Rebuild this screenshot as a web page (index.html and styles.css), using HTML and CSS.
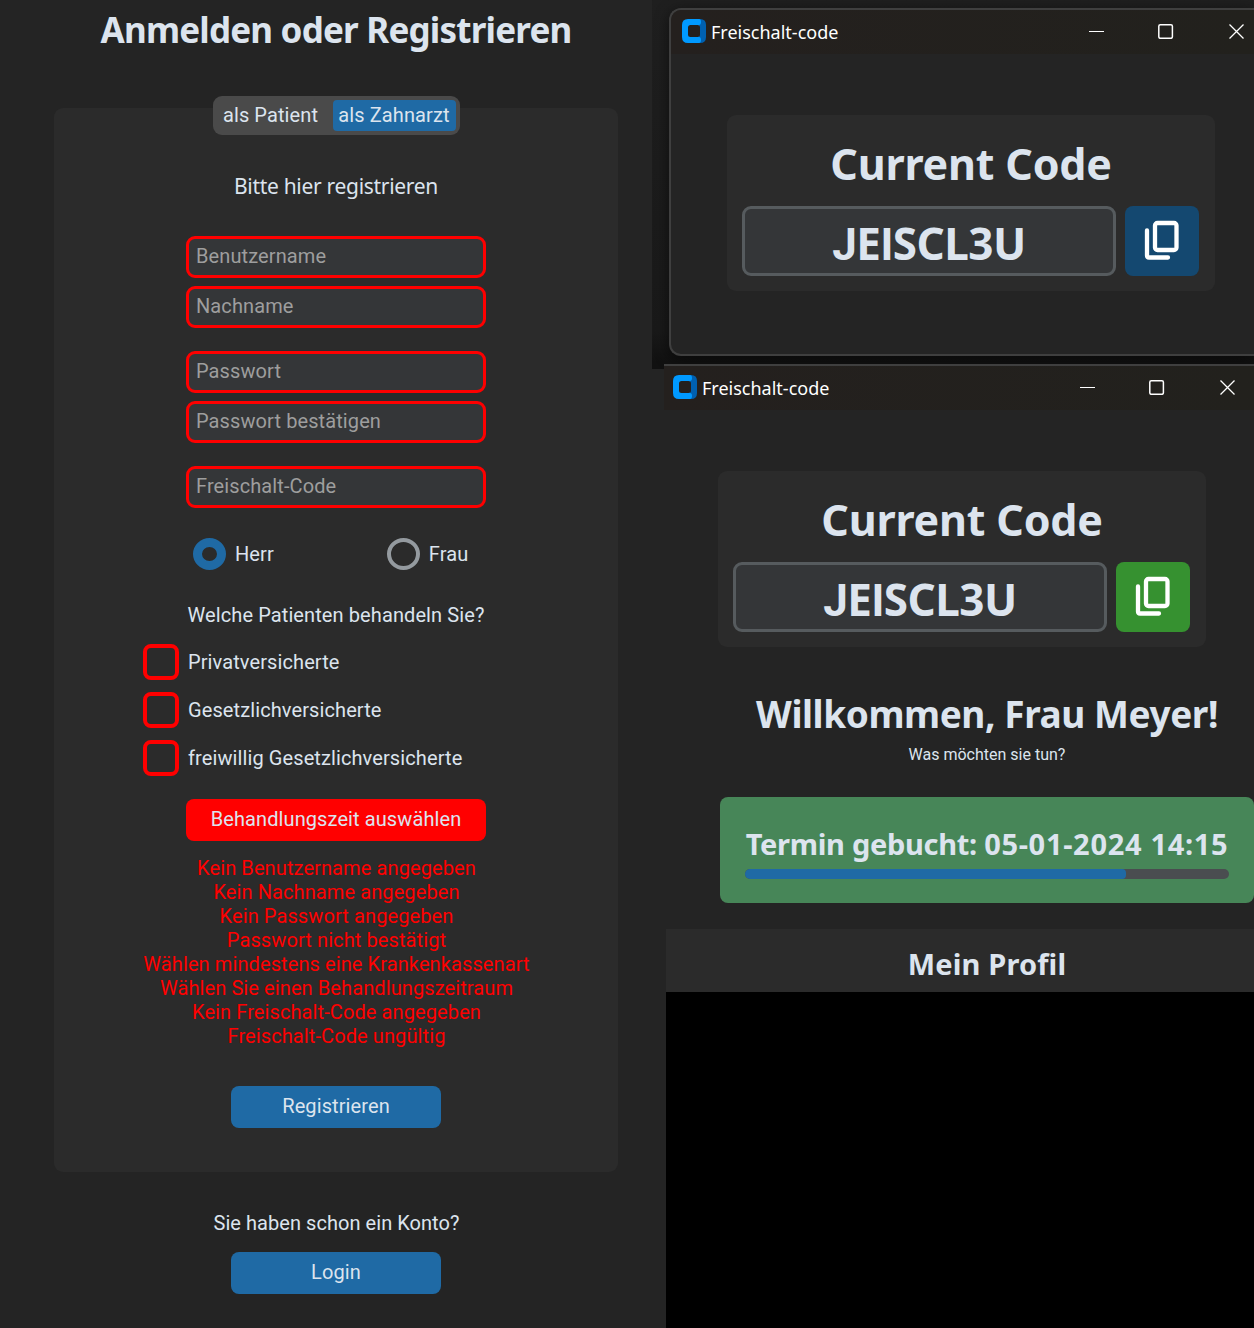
FILE: index.html
```html
<!DOCTYPE html>
<html lang="de">
<head>
<meta charset="utf-8">
<title>Anmelden oder Registrieren</title>
<link rel="stylesheet" href="styles.css">
</head>
<body>
<svg class="defs" width="0" height="0">
  <symbol id="logo" viewBox="0 0 24 24">
    <path fill="#0060b0" d="M15 0h3q6 0 6 6v12q0 6-6 6h-3z"/>
    <path fill="#0099ff" d="M6 0h11q2 0 2 3t-2 3v12q2 0 2 3t-2 3H6q-6 0-6-6V6q0-6 6-6z"/>
    <rect x="6" y="6" width="12" height="12" rx="2.5" fill="#24201e"/>
  </symbol>
  <symbol id="copy" viewBox="0 0 36 42">
    <rect x="11" y="3" width="21.500" height="27" rx="2.500" fill="none" stroke="#fff" stroke-width="4.300"/>
    <path d="M3 10.500V35.500Q3 37.500 5 37.500H24" fill="none" stroke="#fff" stroke-width="4.300" stroke-linecap="round"/>
  </symbol>
  <symbol id="controls" viewBox="0 0 156 16">
    <g fill="none" stroke="#fff">
      <path d="M0 8.500H15" stroke-width="1"/>
      <rect x="69.800" y="1.700" width="13.600" height="13.600" rx="1.500" stroke-width="1.500"/>
      <path d="M140.500 1.500l14 14M154.500 1.500l-14 14" stroke-width="1.300"/>
    </g>
  </symbol>
</svg>
<main class="page">
  <section class="register">
    <h1 class="title">Anmelden oder Registrieren</h1>
    <div class="panel">
      <div class="tabs"><button class="tab">als Patient</button><button class="tab active">als Zahnarzt</button></div>
      <p class="hint">Bitte hier registrieren</p>
      <input class="field" placeholder="Benutzername">
      <input class="field" placeholder="Nachname">
      <input class="field spaced" placeholder="Passwort">
      <input class="field" placeholder="Passwort bestätigen">
      <input class="field spaced" placeholder="Freischalt-Code">
      <div class="radios">
        <span class="option"><i class="radio checked"></i>Herr</span>
        <span class="option"><i class="radio"></i>Frau</span>
      </div>
      <p class="question">Welche Patienten behandeln Sie?</p>
      <div class="checks">
        <span class="option"><i class="check"></i>Privatversicherte</span>
        <span class="option"><i class="check"></i>Gesetzlichversicherte</span>
        <span class="option"><i class="check"></i>freiwillig Gesetzlichversicherte</span>
      </div>
      <button class="btn danger">Behandlungszeit auswählen</button>
      <div class="errors">
        <p>Kein Benutzername angegeben</p>
        <p>Kein Nachname angegeben</p>
        <p>Kein Passwort angegeben</p>
        <p>Passwort nicht bestätigt</p>
        <p>Wählen mindestens eine Krankenkassenart</p>
        <p>Wählen Sie einen Behandlungszeitraum</p>
        <p>Kein Freischalt-Code angegeben</p>
        <p>Freischalt-Code ungültig</p>
      </div>
      <button class="btn">Registrieren</button>
    </div>
    <p class="account">Sie haben schon ein Konto?</p>
    <button class="btn">Login</button>
  </section>
  <section class="side">
    <div class="backdrop">
      <div class="window first">
        <header class="bar"><svg class="logo"><use href="#logo"/></svg><span>Freischalt-code</span><svg class="controls"><use href="#controls"/></svg></header>
        <div class="card">
          <h2 class="code-title">Current Code</h2>
          <div class="code-row"><div class="code"><span class="plain">J</span>E<span class="plain">I</span>SCL3U</div><button class="copy"><svg class="copy-icon"><use href="#copy"/></svg></button></div>
        </div>
      </div>
    </div>
    <div class="window second">
      <header class="bar"><svg class="logo"><use href="#logo"/></svg><span>Freischalt-code</span><svg class="controls"><use href="#controls"/></svg></header>
      <div class="card">
        <h2 class="code-title">Current Code</h2>
        <div class="code-row"><div class="code"><span class="plain">J</span>E<span class="plain">I</span>SCL3U</div><button class="copy done"><svg class="copy-icon"><use href="#copy"/></svg></button></div>
      </div>
    </div>
    <div class="welcome">
      <h2 class="greeting">Willkommen, Frau Meyer!</h2>
      <p class="sub">Was möchten sie tun?</p>
      <div class="booking">
        <h3 class="booked">Termin gebucht: <span class="date">05-01-2024 14:15</span></h3>
        <div class="track"><div class="progress" style="width:381px"></div></div>
      </div>
    </div>
    <div class="profile">
      <h3 class="profile-title">Mein Profil</h3>
      <div class="void"></div>
    </div>
  </section>
</main>
</body>
</html>
```
FILE: styles.css
```css
* { box-sizing: border-box; margin: 0; padding: 0; }
body { width: 1254px; height: 1328px; overflow: hidden; background: #242424; color: #dce4ee; font: 20px/24px Roboto, sans-serif; letter-spacing: 0.1px; }
button, input { font: inherit; letter-spacing: inherit; color: inherit; border: 0; outline: 0; }
.defs { display: block; height: 0; }
.page { display: grid; grid-template-columns: 652px 602px; height: 1328px; }
h1, h2, h3, .hint, .bar { font-family: "Noto Sans", "Open Sans", sans-serif; white-space: nowrap; }

.register { display: flex; flex-direction: column; align-items: center; padding-left: 20px; }
.title { font-size: 35px; line-height: 59px; height: 108px; letter-spacing: -0.8px; }
.panel { width: 564px; height: 1064px; border-radius: 9px; background: #2b2b2b; display: flex; flex-direction: column; align-items: center; }
.tabs { display: flex; justify-content: space-between; width: 247px; height: 39px; margin-top: -12px; padding: 4px; border-radius: 9px; background: #4a4a4a; flex: none; }
.tab { background: none; width: 108px; height: 31px; border-radius: 4px; padding-bottom: 1px; white-space: nowrap; }
.tab.active { background: #1f6aa5; width: 123px; }
.hint { height: 101px; padding-top: 39px; font-size: 21px; letter-spacing: -0.3px; }
.field { width: 300px; height: 42px; margin-bottom: 8px; flex: none; padding: 0 7px 2px; border: 3px solid #f00; border-radius: 9px; background: #343638; }
.field::placeholder { color: #9e9e9e; opacity: 1; }
.field.spaced { margin-top: 15px; }
.radios { display: flex; width: 286px; height: 32px; margin-top: 22px; gap: 113px; }
.option { display: flex; align-items: center; gap: 9px; white-space: nowrap; }
.radio { width: 33px; height: 32px; border: 4px solid #949a9f; border-radius: 50%; }
.radio.checked { border: 9px solid #1f6aa5; }
.question { margin-top: 33px; white-space: nowrap; }
.checks { display: flex; flex-direction: column; gap: 12px; align-self: flex-start; margin: 17px 0 23px 89px; }
.check { width: 36px; height: 36px; border: 4px solid #f00; border-radius: 8px; }
.btn { width: 210px; height: 42px; flex: none; border-radius: 8px; padding-bottom: 2px; background: #1f6aa5; white-space: nowrap; }
.btn.danger { width: 300px; background: #f00; }
.errors { margin: 15px 0 38px; padding-left: 1px; text-align: center; color: #f00; white-space: nowrap; }
.account { margin: 39px 0 17px; padding-left: 1px; white-space: nowrap; letter-spacing: 0.05px; }

.side { display: flex; flex-direction: column; }
.backdrop { height: 369px; margin-bottom: -5px; flex: none; padding: 8px 0 0 17px; background: linear-gradient(#1f1f1f, #191919 90%, #111 98%); }
.window { position: relative; flex: none; border: 2px solid #3f3f3f; border-right: 0; background: #242424; }
.window.first { height: 348px; border-radius: 12px 0 0 12px; box-shadow: 0 3px 14px #0008; overflow: hidden; }
.window.second { height: 316px; margin-left: 12px; border-width: 2px 0 0; }
.bar { display: flex; align-items: center; height: 44px; padding-left: 11px; background: linear-gradient(90deg, #24201e, #22211d); color: #fff; font-size: 18px; letter-spacing: 0; }
.second .bar { padding-left: 9px; }
.logo { width: 24px; height: 24px; margin: -3px 5px 0 0; }
.controls { width: 156px; height: 16px; margin: 0 9px 3px auto; }
.second .controls { margin-right: 18px; }
.card { width: 488px; height: 176px; margin: 61px 0 0 56px; padding: 0 15px; border-radius: 9px; background: #2b2b2b; }
.second .card { margin-left: 54px; }
.code-title { height: 91px; padding-top: 19px; line-height: 60px; font-size: 43px; letter-spacing: -0.2px; text-align: center; }
.code-row { display: flex; gap: 9px; }
.code { width: 374px; height: 70px; border: 3px solid #565b5e; border-radius: 9px; background: #343638; font: bold 44px/68px "Noto Sans", sans-serif; letter-spacing: -0.5px; text-align: center; }
.plain { font-family: Roboto, sans-serif; line-height: 1; }
.copy { width: 74px; height: 70px; border-radius: 8px; background: #144870; }
.copy.done { background: #369130; }
.copy-icon { display: block; width: 36px; height: 42px; margin: -1px 0 0 18.5px; }
.welcome { display: flex; flex-direction: column; align-items: center; width: 534px; height: 249px; flex: none; margin-left: 68px; }
.greeting { margin-top: 4px; font-size: 37px; line-height: 60px; letter-spacing: -0.43px; }
.sub { margin-top: 1px; font-size: 16px; line-height: 20px; letter-spacing: 0; }
.booking { width: 534px; height: 106px; margin-top: 32px; flex: none; padding: 25px; border-radius: 8px; background: #478658; }
.booked { font-size: 29px; line-height: 44px; letter-spacing: -0.3px; text-align: center; }
.date { letter-spacing: 0.68px; }
.track { width: 484px; height: 10px; margin-top: 3px; border-radius: 5px; background: #4a4d50; overflow: hidden; }
.progress { height: 10px; border-radius: 4px; background: #1f6aa5; }
.profile { margin-left: 14px; flex: 1; display: flex; flex-direction: column; }
.profile-title { height: 63px; padding-left: 54px; background: #2b2b2b; font-size: 29px; line-height: 70px; text-align: center; letter-spacing: 0.15px; }
.void { flex: 1; background: #000; }
```
